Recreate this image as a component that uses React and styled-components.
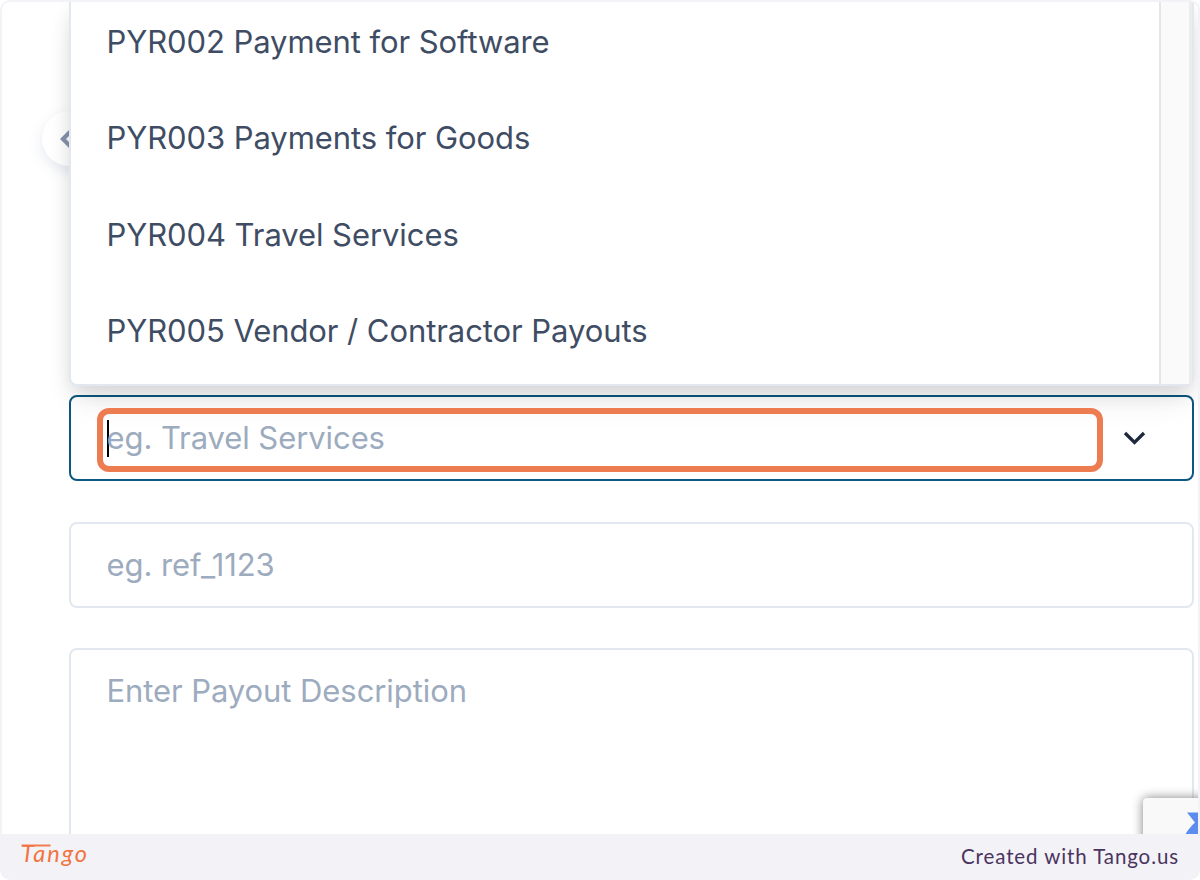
import React from 'react';
import styled, { createGlobalStyle } from 'styled-components';

const GlobalStyle = createGlobalStyle`
  * { box-sizing: border-box; }
  body { margin: 0; background: #fff; }
`;

const Frame = styled.div`
  width: 1200px;
  height: 880px;
  padding: 2px 2px 0;
  display: flex;
  flex-direction: column;
  overflow: hidden;
  border-radius: 10px;
  background: #f3f2f7;
  font-family: Inter, 'Liberation Sans', sans-serif;
`;

const Screen = styled.main`
  position: relative;
  height: 832px;
  flex: none;
  padding: 0 4px 0 67px;
  overflow: hidden;
  border-radius: 8px 8px 0 0;
  background: #fff;
`;

const BackButton = styled.span`
  position: absolute;
  left: 40px;
  top: 109px;
  width: 55px;
  height: 55px;
  display: flex;
  align-items: center;
  padding-left: 17px;
  border-radius: 50%;
  background: #fff;
  color: #8593aa;
  box-shadow: 0 5px 14px rgba(100, 116, 160, 0.16);
`;

const Menu = styled.div`
  position: relative;
  z-index: 1;
  height: 384px;
  display: flex;
  border: 2px solid #e2e8f0;
  border-top: 0;
  border-radius: 0 0 8px 8px;
  background: #fff;
  box-shadow: 0 20px 32px -6px rgba(0, 0, 0, 0.08), 0 8px 20px -2px rgba(0, 0, 0, 0.12);
`;

const Options = styled.ul`
  flex: 1;
  margin: 0;
  padding: 0 0 5px;
  display: flex;
  flex-direction: column;
  justify-content: flex-end;
  list-style: none;
`;

const Option = styled.li`
  height: 96.5px;
  flex: none;
  padding-left: 35.5px;
  display: flex;
  align-items: center;
  color: #3f4d64;
  font-size: 31px;
  letter-spacing: -0.075px;
  white-space: nowrap;
`;

const ScrollTrack = styled.div`
  width: 33px;
  border-left: 2px solid #e6e6e6;
  border-right: 3px solid #ececec;
  background: #fafafa;
`;

const Field = styled.div`
  height: ${(p) => p.$height}px;
  margin-top: ${(p) => p.$gap}px;
  padding: ${(p) => p.$pad || '0 0 0 35.5px'};
  display: flex;
  align-items: ${(p) => p.$align || 'center'};
  border: 2px solid ${(p) => (p.$active ? '#0b5880' : '#e2e8f0')};
  border-radius: 8px;
  background: #fff;
`;

const Placeholder = styled.span`
  color: #9dabbe;
  font-size: 31px;
  line-height: 38px;
  letter-spacing: -0.08px;
  white-space: nowrap;
`;

const Highlight = styled.div`
  position: relative;
  z-index: 2;
  width: 1006px;
  height: 64px;
  margin: 3px 20px 0 0;
  padding: 0 0 3px 3.5px;
  display: flex;
  align-items: center;
  border: 6px solid #ee7c51;
  border-radius: 12px;
`;

const Caret = styled.i`
  width: 2px;
  height: 37px;
  margin-right: -2px;
  background: #000;
`;

const Badge = styled.div`
  position: absolute;
  z-index: 3;
  left: 1141px;
  top: 796px;
  width: 80px;
  height: 60px;
  border-radius: 4px;
  background: #f9f9f9;
  box-shadow: 0 0 11px gray;
`;

const Footer = styled.footer`
  height: 46px;
  padding: 0 19px 2px 18px;
  display: flex;
  align-items: center;
  justify-content: space-between;
`;

const Credit = styled.span`
  color: #4a3460;
  font-family: Lato, 'Liberation Sans', sans-serif;
  font-size: 20.5px;
  letter-spacing: 0.9px;
  line-height: 24px;
`;

const options = [
  'PYR002 Payment for Software',
  'PYR003 Payments for Goods',
  'PYR004 Travel Services',
  'PYR005 Vendor / Contractor Payouts',
];

function Logo() {
  return (
    <svg width="74" height="40" viewBox="0 0 74 40" fill="none">
      <path d="M1.5 9.5H30.5" stroke="#f17d50" strokeWidth="1.9" />
      <text x="1" y="26" fill="#f17442" fontFamily="Lato, sans-serif" fontStyle="italic" fontSize="23.5" textLength="66">
        Tango
      </text>
    </svg>
  );
}

export default function App() {
  return (
    <Frame>
      <GlobalStyle />
      <Screen>
        <BackButton>
          <svg width="16" height="20" viewBox="0 0 16 20" fill="none">
            <path d="M12 2L4 10L12 18" stroke="currentColor" strokeWidth="4.2" />
          </svg>
        </BackButton>
        <Menu>
          <Options>
            {options.map((label) => (
              <Option key={label}>{label}</Option>
            ))}
          </Options>
          <ScrollTrack />
        </Menu>
        <Field $height={86} $gap={9} $active $pad="0 0 0 26px">
          <Highlight>
            <Caret />
            <Placeholder>eg. Travel Services</Placeholder>
          </Highlight>
          <svg width="24" height="16" viewBox="0 0 24 16" fill="none">
            <path d="M2 3L11.5 12.5L21 3" stroke="#1e293b" strokeWidth="3.3" />
          </svg>
        </Field>
        <Field $height={86} $gap={41}>
          <Placeholder>eg. ref_1123</Placeholder>
        </Field>
        <Field $height={230} $gap={40} $align="flex-start" $pad="22px 0 0 35.5px">
          <Placeholder>Enter Payout Description</Placeholder>
        </Field>
        <Badge>
          <svg width="80" height="60" viewBox="0 0 80 60">
            <path d="M44 14.5H80V50H38Q40 38 46 31Q49 27 52 24.5Z" fill="#5b8def" />
          </svg>
        </Badge>
      </Screen>
      <Footer>
        <Logo />
        <Credit>Created with Tango.us</Credit>
      </Footer>
    </Frame>
  );
}
